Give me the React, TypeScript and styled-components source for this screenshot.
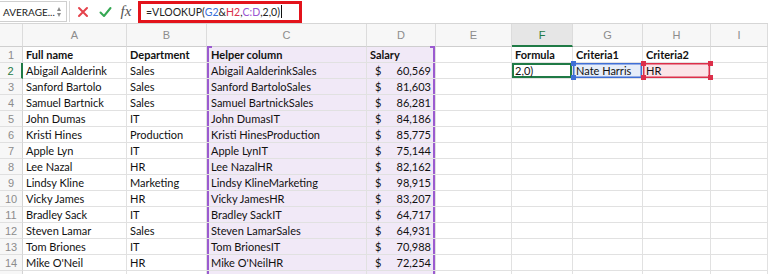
import React from "react";
import styled, { createGlobalStyle, css } from "styled-components";

const Global = createGlobalStyle`
  html, body { margin: 0; padding: 0; background: #ffffff; }
  body { width: 768px; height: 274px; overflow: hidden; font-family: "Lato", "Liberation Sans", sans-serif; }
  * { box-sizing: border-box; }
`;

const Page = styled.div`
  width: 768px;
  height: 274px;
  overflow: hidden;
  display: flex;
  flex-direction: column;
`;

const FormulaBar = styled.div`
  height: 24px;
  flex: none;
  display: flex;
  align-items: center;
  border-bottom: 1px solid #d6d6d6;
  background: #ffffff;
`;

const NameBox = styled.div`
  width: 67px;
  height: 21px;
  border: 1px solid #cfcfcf;
  border-left: none;
  display: flex;
  align-items: center;
  justify-content: space-between;
  padding: 0 5px 0 3px;
  font-family: "Lato", "Liberation Sans", sans-serif;
  font-size: 10px;
  color: #222;
`;

const Spinner = styled.div`
  display: flex;
  flex-direction: column;
  gap: 2px;
  align-items: center;
`;

const Tri = styled.div<{ $up?: boolean }>`
  width: 0;
  height: 0;
  border-left: 2.5px solid transparent;
  border-right: 2.5px solid transparent;
  ${(p) => (p.$up ? css`border-bottom: 4px solid #8a8a8a;` : css`border-top: 4px solid #8a8a8a;`)}
`;

const Divider = styled.div`
  width: 1px;
  height: 21px;
  background: #d8d8d8;
  margin-left: 2px;
`;

const IconBtn = styled.div<{ $w: number }>`
  width: ${(p) => p.$w}px;
  display: flex;
  align-items: center;
  justify-content: center;
`;

const Fx = styled.span`
  font-family: "Liberation Serif", serif;
  font-style: italic;
  font-size: 15px;
  color: #555;
`;

const FormulaInput = styled.div`
  width: 164px;
  height: 22px;
  border: 3px solid #e3131b;
  display: flex;
  align-items: center;
  padding-left: 5px;
  font-family: "Lato", "Liberation Sans", sans-serif;
  font-size: 10.5px;
  color: #222;
  white-space: nowrap;
`;

const Tok = styled.span<{ $c?: string }>`
  color: ${(p) => p.$c || "#222"};
`;

const Caret = styled.span`
  display: inline-block;
  width: 1px;
  height: 13px;
  background: #111;
  margin-left: 1px;
`;

const COLS = "23px 104px 80px 160px 69px 76px 61px 70px 68px 1fr";

const Sheet = styled.div`
  display: grid;
  grid-template-columns: ${COLS};
  grid-auto-rows: 16px;
  grid-template-rows: 23px;
`;

const ColHead = styled.div<{ $active?: boolean }>`
  background: ${(p) => (p.$active ? "#e6e6e6" : "#f7f7f7")};
  border-right: 1px solid #dcdcdc;
  border-bottom: ${(p) => (p.$active ? "2px solid #1f7a45" : "1px solid #cfcfcf")};
  display: flex;
  align-items: center;
  justify-content: center;
  font-family: "Liberation Sans", sans-serif;
  font-size: 11px;
  color: ${(p) => (p.$active ? "#1f7a45" : "#8c8c8c")};
  padding-top: ${(p) => (p.$active ? "1px" : "0")};
`;

const RowHead = styled.div<{ $active?: boolean }>`
  background: #f7f7f7;
  border-bottom: 1px solid #e0e0e0;
  border-right: ${(p) => (p.$active ? "2px solid #1f7a45" : "1px solid #d4d4d4")};
  display: flex;
  align-items: center;
  justify-content: center;
  font-family: "Liberation Sans", sans-serif;
  font-size: 11px;
  color: ${(p) => (p.$active ? "#1f7a45" : "#8c8c8c")};
`;

type Kind = "plain" | "purpleL" | "purpleR" | "formula" | "blue" | "red";

const kindStyles: Record<Kind, ReturnType<typeof css>> = {
  plain: css``,
  purpleL: css`
    background: #f1e9f7;
    box-shadow: inset 2px 0 0 #9b5bd0;
    padding-left: 4px;
  `,
  purpleR: css`
    background: #f1e9f7;
    box-shadow: inset -2px 0 0 #9b5bd0;
    padding-right: 4px;
  `,
  formula: css`
    box-shadow: inset 0 0 0 2px #1f7a45;
  `,
  blue: css`
    background: #e6edf9;
    box-shadow: inset 0 0 0 1.5px #3f6fd6;
  `,
  red: css`
    background: #fbe4e8;
    box-shadow: inset 0 0 0 1.5px #dc2f4a;
  `,
};

const Cell = styled.div<{ $kind?: Kind; $bold?: boolean }>`
  position: relative;
  border-right: 1px solid #e1e1e1;
  border-bottom: 1px solid #e1e1e1;
  display: flex;
  align-items: center;
  padding-left: 3px;
  font-family: "Lato", "Liberation Sans", sans-serif;
  font-size: 11px;
  font-weight: ${(p) => (p.$bold ? 700 : 400)};
  color: #111;
  white-space: nowrap;
  overflow: visible;
  ${(p) => kindStyles[p.$kind || "plain"]}
`;

const Money = styled.div`
  flex: 1;
  display: flex;
  justify-content: space-between;
  padding-left: 5px;
`;

const Handle = styled.span<{ $c: string; $pos: "tl" | "tr" | "bl" | "br" }>`
  position: absolute;
  width: 5px;
  height: 5px;
  background: ${(p) => p.$c};
  ${(p) => (p.$pos[0] === "t" ? "top: -2px;" : "bottom: -2px;")}
  ${(p) => (p.$pos[1] === "l" ? "left: -2px;" : "right: -3px;")}
  z-index: 2;
`;

const Tick = styled.span<{ $side: "l" | "r" }>`
  position: absolute;
  top: -1px;
  ${(p) => (p.$side === "l" ? "left: 0;" : "right: 0;")}
  width: 5px;
  height: 2px;
  background: #9b5bd0;
`;

const data: [string, string, string][] = [
  ["Abigail Aalderink", "Sales", "60,569"],
  ["Sanford Bartolo", "Sales", "81,603"],
  ["Samuel Bartnick", "Sales", "86,281"],
  ["John Dumas", "IT", "84,186"],
  ["Kristi Hines", "Production", "85,775"],
  ["Apple Lyn", "IT", "75,144"],
  ["Lee Nazal", "HR", "82,162"],
  ["Lindsy Kline", "Marketing", "98,915"],
  ["Vicky James", "HR", "83,207"],
  ["Bradley Sack", "IT", "64,717"],
  ["Steven Lamar", "Sales", "64,931"],
  ["Tom Briones", "IT", "70,988"],
  ["Mike O'Neil", "HR", "72,254"],
  ["", "", ""],
];

const letters = ["A", "B", "C", "D", "E", "F", "G", "H", "I"];

const XIcon = () => (
  <svg width="12" height="12" viewBox="0 0 12 12">
    <path d="M2 2 L10 10 M10 2 L2 10" stroke="#e5424b" strokeWidth="2" strokeLinecap="round" />
  </svg>
);

const CheckIcon = () => (
  <svg width="13" height="12" viewBox="0 0 13 12">
    <path d="M1.5 6.5 L5 10 L11.5 2" stroke="#35a853" strokeWidth="2" fill="none" strokeLinecap="round" strokeLinejoin="round" />
  </svg>
);

export default function App() {
  return (
    <Page>
      <Global />
      <FormulaBar>
        <NameBox>
          <span>AVERAGE...</span>
          <Spinner>
            <Tri $up />
            <Tri />
          </Spinner>
        </NameBox>
        <Divider />
        <IconBtn $w={26}>
          <XIcon />
        </IconBtn>
        <IconBtn $w={18}>
          <CheckIcon />
        </IconBtn>
        <IconBtn $w={24}>
          <Fx>fx</Fx>
        </IconBtn>
        <FormulaInput>
          <Tok>=VLOOKUP(</Tok>
          <Tok $c="#3a6fd8">G2</Tok>
          <Tok>&amp;</Tok>
          <Tok $c="#d8304b">H2</Tok>
          <Tok>,</Tok>
          <Tok $c="#9a55d2">C:D</Tok>
          <Tok>,2,0)</Tok>
          <Caret />
        </FormulaInput>
      </FormulaBar>
      <Sheet>
        <ColHead />
        {letters.map((l) => (
          <ColHead key={l} $active={l === "F"}>
            {l}
          </ColHead>
        ))}

        <RowHead>1</RowHead>
        <Cell $bold>Full name</Cell>
        <Cell $bold>Department</Cell>
        <Cell $bold $kind="purpleL">
          <Tick $side="l" />
          Helper column
        </Cell>
        <Cell $bold $kind="purpleR">
          <Tick $side="r" />
          Salary
        </Cell>
        <Cell />
        <Cell $bold>Formula</Cell>
        <Cell $bold>Criteria1</Cell>
        <Cell $bold>Criteria2</Cell>
        <Cell />

        {data.map(([name, dept, sal], i) => {
          const r = i + 2;
          return (
            <React.Fragment key={r}>
              <RowHead $active={r === 2}>{r <= 14 ? r : ""}</RowHead>
              <Cell>{name}</Cell>
              <Cell>{dept}</Cell>
              <Cell $kind="purpleL">{name ? name + dept : ""}</Cell>
              <Cell $kind="purpleR">
                {sal && (
                  <Money>
                    <span>$</span>
                    <span>{sal}</span>
                  </Money>
                )}
              </Cell>
              <Cell />
              {r === 2 ? (
                <>
                  <Cell $kind="formula">2,0)</Cell>
                  <Cell $kind="blue">
                    <Handle $c="#3f6fd6" $pos="tl" />
                    <Handle $c="#3f6fd6" $pos="bl" />
                    Nate Harris
                  </Cell>
                  <Cell $kind="red">
                    <Handle $c="#dc2f4a" $pos="tl" />
                    <Handle $c="#dc2f4a" $pos="tr" />
                    <Handle $c="#dc2f4a" $pos="bl" />
                    <Handle $c="#dc2f4a" $pos="br" />
                    HR
                  </Cell>
                </>
              ) : (
                <>
                  <Cell />
                  <Cell />
                  <Cell />
                </>
              )}
              <Cell />
            </React.Fragment>
          );
        })}
      </Sheet>
    </Page>
  );
}
